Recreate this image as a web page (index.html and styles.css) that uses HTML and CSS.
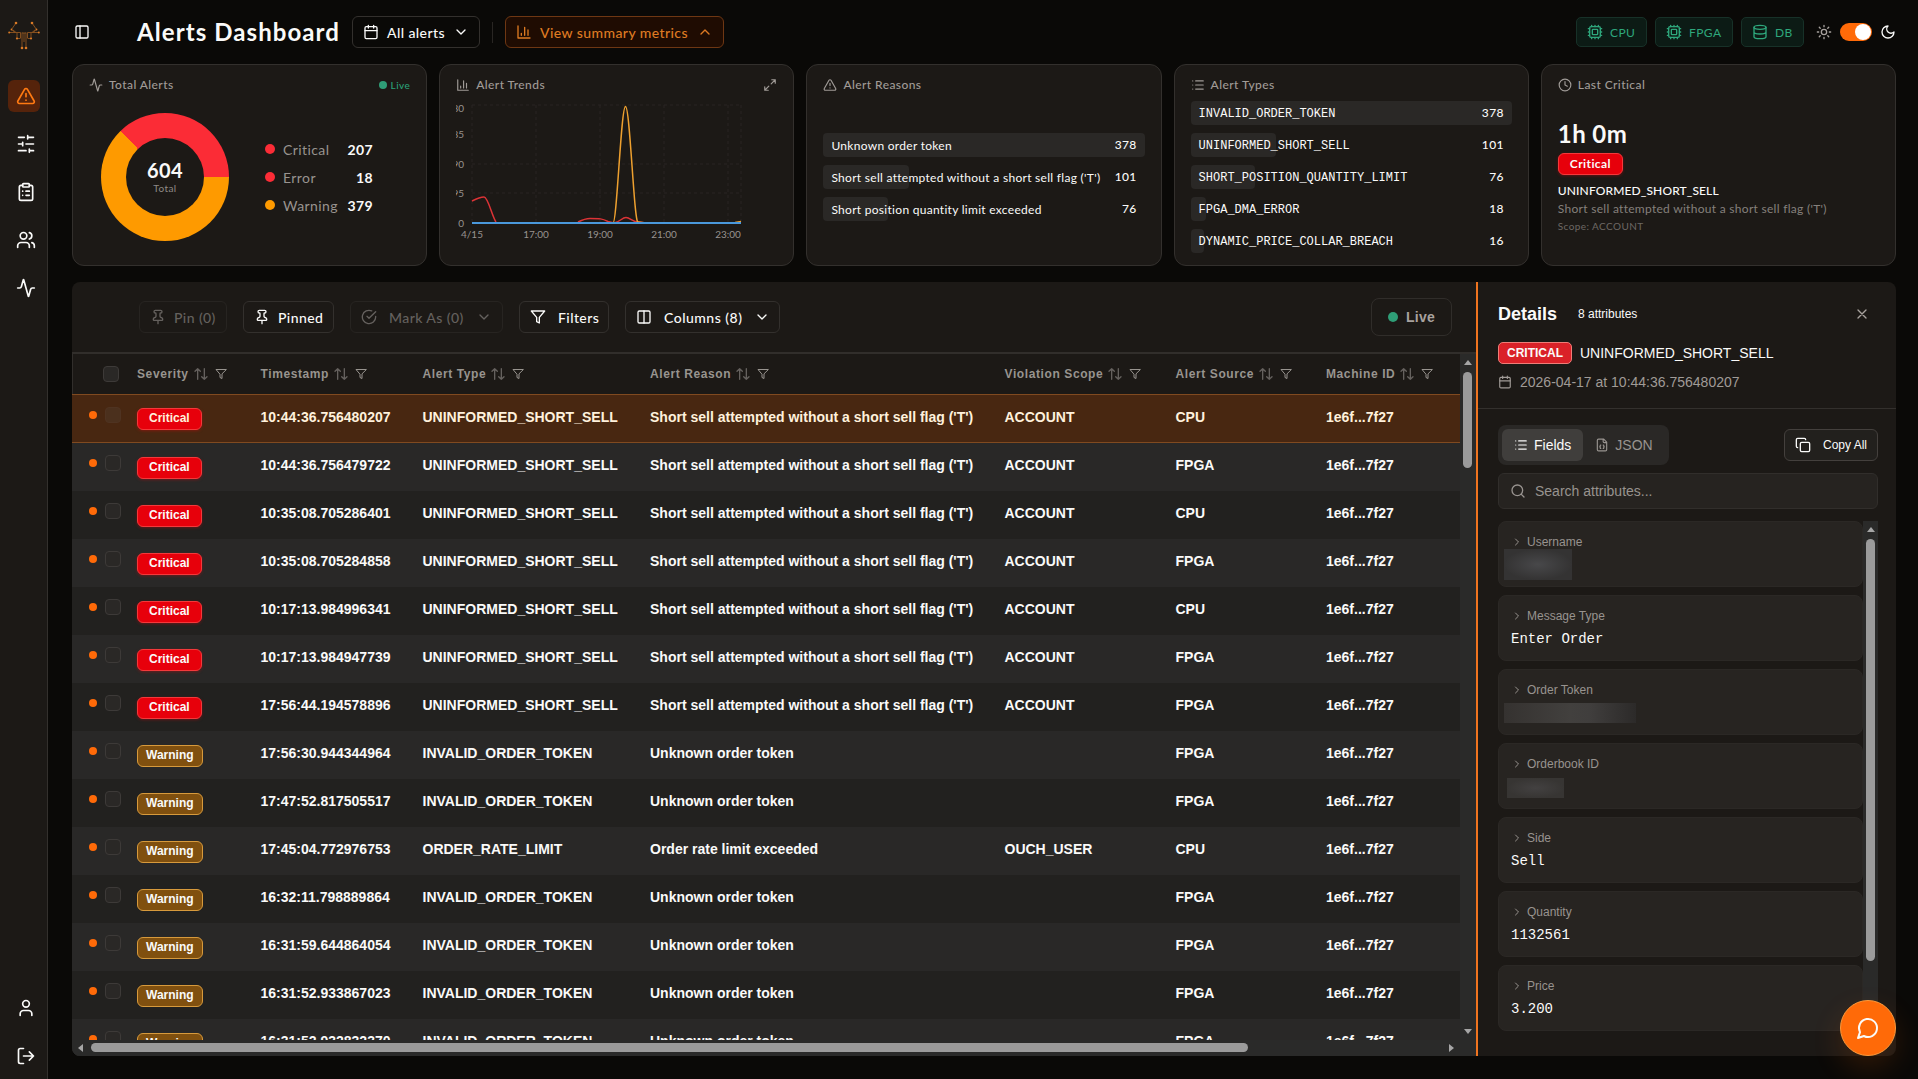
FILE: index.html
```
<!DOCTYPE html>
<html lang="en">
<head>
    <meta charset="UTF-8">
    <title>Alerts Dashboard</title>
    <link rel="stylesheet" href="styles.css">
</head>
<body>
    <!-- shared icons -->
    <svg class="sprite">
        <symbol id="i-panel" viewBox="0 0 24 24"><rect x="3" y="3" width="18" height="18" rx="2"/><path d="M9 3v18"/></symbol>
        <symbol id="i-calendar" viewBox="0 0 24 24"><path d="M8 2v4M16 2v4M3 10h18"/><rect x="3" y="4" width="18" height="18" rx="2"/></symbol>
        <symbol id="i-down" viewBox="0 0 24 24"><path d="m6 9 6 6 6-6"/></symbol>
        <symbol id="i-up" viewBox="0 0 24 24"><path d="m18 15-6-6-6 6"/></symbol>
        <symbol id="i-right" viewBox="0 0 24 24"><path d="m9 18 6-6-6-6"/></symbol>
        <symbol id="i-chart" viewBox="0 0 24 24"><path d="M3 3v18h18M18 17V9M13 17V5M8 17v-3"/></symbol>
        <symbol id="i-alert" viewBox="0 0 24 24"><path d="m21.73 18-8-14a2 2 0 0 0-3.48 0l-8 14A2 2 0 0 0 4 21h16a2 2 0 0 0 1.73-3M12 9v4M12 17h.01"/></symbol>
        <symbol id="i-sliders" viewBox="0 0 24 24"><path d="M21 4h-7M10 4H3M21 12h-9M8 12H3M21 20h-5M12 20H3M14 2v4M8 10v4M16 18v4"/></symbol>
        <symbol id="i-clipboard" viewBox="0 0 24 24"><rect x="8" y="2" width="8" height="4" rx="1"/><path d="M16 4h2a2 2 0 0 1 2 2v14a2 2 0 0 1-2 2H6a2 2 0 0 1-2-2V6a2 2 0 0 1 2-2h2M12 11h4M12 16h4M8 11h.01M8 16h.01"/></symbol>
        <symbol id="i-users" viewBox="0 0 24 24"><path d="M16 21v-2a4 4 0 0 0-4-4H6a4 4 0 0 0-4 4v2M22 21v-2a4 4 0 0 0-3-3.87M16 3.13a4 4 0 0 1 0 7.75"/><circle cx="9" cy="7" r="4"/></symbol>
        <symbol id="i-activity" viewBox="0 0 24 24"><path d="M22 12h-2.48a2 2 0 0 0-1.93 1.46l-2.35 8.36a.25.25 0 0 1-.48 0L9.24 2.18a.25.25 0 0 0-.48 0l-2.35 8.36A2 2 0 0 1 4.49 12H2"/></symbol>
        <symbol id="i-user" viewBox="0 0 24 24"><path d="M19 21v-2a4 4 0 0 0-4-4H9a4 4 0 0 0-4 4v2"/><circle cx="12" cy="7" r="4"/></symbol>
        <symbol id="i-logout" viewBox="0 0 24 24"><path d="M9 21H5a2 2 0 0 1-2-2V5a2 2 0 0 1 2-2h4M16 17l5-5-5-5M21 12H9"/></symbol>
        <symbol id="i-pin" viewBox="0 0 24 24"><path d="M12 17v5M9 10.76a2 2 0 0 1-1.11 1.79l-1.78.9A2 2 0 0 0 5 15.24V16a1 1 0 0 0 1 1h12a1 1 0 0 0 1-1v-.76a2 2 0 0 0-1.11-1.79l-1.78-.9A2 2 0 0 1 15 10.76V7a1 1 0 0 1 1-1 2 2 0 0 0 0-4H8a2 2 0 0 0 0 4 1 1 0 0 1 1 1z"/></symbol>
        <symbol id="i-check" viewBox="0 0 24 24"><path d="M22 11.08V12a10 10 0 1 1-5.93-9.14M9 11l3 3L22 4"/></symbol>
        <symbol id="i-filter" viewBox="0 0 24 24"><path d="M22 3H2l8 9.46V19l4 2v-8.54z"/></symbol>
        <symbol id="i-columns" viewBox="0 0 24 24"><rect x="3" y="3" width="18" height="18" rx="2"/><path d="M12 3v18"/></symbol>
        <symbol id="i-sort" viewBox="0 0 24 24"><path d="m21 16-4 4-4-4M17 20V4M3 8l4-4 4 4M7 4v16"/></symbol>
        <symbol id="i-close" viewBox="0 0 24 24"><path d="M18 6 6 18M6 6l12 12"/></symbol>
        <symbol id="i-list" viewBox="0 0 24 24"><path d="M3 5h.01M3 12h.01M3 19h.01M8 5h13M8 12h13M8 19h13"/></symbol>
        <symbol id="i-json" viewBox="0 0 24 24"><path d="M15 2H6a2 2 0 0 0-2 2v16a2 2 0 0 0 2 2h12a2 2 0 0 0 2-2V7ZM14 2v4a2 2 0 0 0 2 2h4M10 12a1 1 0 0 0-1 1v1a1 1 0 0 1-1 1 1 1 0 0 1 1 1v1a1 1 0 0 0 1 1M14 18a1 1 0 0 0 1-1v-1a1 1 0 0 1 1-1 1 1 0 0 1-1-1v-1a1 1 0 0 0-1-1"/></symbol>
        <symbol id="i-copy" viewBox="0 0 24 24"><rect x="8" y="8" width="14" height="14" rx="2"/><path d="M4 16c-1.1 0-2-.9-2-2V4c0-1.1.9-2 2-2h10c1.1 0 2 .9 2 2"/></symbol>
        <symbol id="i-search" viewBox="0 0 24 24"><circle cx="11" cy="11" r="8"/><path d="m21 21-4.3-4.3"/></symbol>
        <symbol id="i-expand" viewBox="0 0 24 24"><path d="M15 3h6v6M21 3l-7 7M3 21l7-7M9 21H3v-6"/></symbol>
        <symbol id="i-clock" viewBox="0 0 24 24"><circle cx="12" cy="12" r="10"/><path d="M12 6v6l4 2"/></symbol>
        <symbol id="i-cpu" viewBox="0 0 24 24"><rect x="4" y="4" width="16" height="16" rx="2"/><rect x="8" y="8" width="8" height="8" rx="1"/><path d="M12 20v2M12 2v2M17 20v2M17 2v2M2 12h2M2 17h2M2 7h2M20 12h2M20 17h2M20 7h2M7 20v2M7 2v2"/></symbol>
        <symbol id="i-db" viewBox="0 0 24 24"><ellipse cx="12" cy="5" rx="9" ry="3"/><path d="M3 5v14a9 3 0 0 0 18 0V5M3 12a9 3 0 0 0 18 0"/></symbol>
        <symbol id="i-sun" viewBox="0 0 24 24"><circle cx="12" cy="12" r="4"/><path d="M12 2v2M12 20v2M4.93 4.93l1.41 1.41M17.66 17.66l1.41 1.41M2 12h2M20 12h2M6.34 17.66l-1.41 1.41M19.07 4.93l-1.41 1.41"/></symbol>
        <symbol id="i-moon" viewBox="0 0 24 24"><path d="M12 3a6 6 0 0 0 9 9 9 9 0 1 1-9-9Z"/></symbol>
        <symbol id="i-chat" viewBox="0 0 24 24"><path d="M7.9 20A9 9 0 1 0 4 16.1L2 22Z"/></symbol>
    </svg>

    <div class="app">
        <nav class="sidebar">
            <svg class="logo" viewBox="0 0 32 30">
                <path d="M8 2 3.500 8.500 7 11.500h5.500V17M24 2l4.500 6.500-3.500 3h-5.500V17M1 11.500h6M31 11.500h-6M5 9l3 2.500M27 9l-3 2.500M9 12v5.500M23 12v5.500M14 11.500V27M18 11.500V27M14 12h4M16 12v9M9 17.500h3.500M23 17.500h-3.500"/>
                <g><circle cx="8" cy="2" r="1.3"/><circle cx="24" cy="2" r="1.3"/><circle cx="1.200" cy="11.500" r="1"/><circle cx="30.800" cy="11.500" r="1"/><circle cx="3.500" cy="8.500" r="0.900"/><circle cx="28.500" cy="8.500" r="0.900"/><circle cx="14" cy="27" r="1.3"/><circle cx="18" cy="27" r="1.3"/><circle cx="9" cy="17.500" r="1.100"/><circle cx="23" cy="17.500" r="1.100"/></g>
            </svg>
            <a class="nav-item active"><svg class="icon"><use href="#i-alert"/></svg></a>
            <a class="nav-item"><svg class="icon"><use href="#i-sliders"/></svg></a>
            <a class="nav-item"><svg class="icon"><use href="#i-clipboard"/></svg></a>
            <a class="nav-item"><svg class="icon"><use href="#i-users"/></svg></a>
            <a class="nav-item"><svg class="icon"><use href="#i-activity"/></svg></a>
            <div class="nav-bottom">
                <a class="nav-item"><svg class="icon"><use href="#i-user"/></svg></a>
                <a class="nav-item"><svg class="icon"><use href="#i-logout"/></svg></a>
            </div>
        </nav>

        <main class="main">
            <header class="topbar">
                <svg class="icon panel-toggle"><use href="#i-panel"/></svg>
                <h1>Alerts Dashboard</h1>
                <button class="btn all-alerts"><svg class="icon"><use href="#i-calendar"/></svg><span>All alerts</span><svg class="icon"><use href="#i-down"/></svg></button>
                <div class="divider"></div>
                <button class="btn summary"><svg class="icon"><use href="#i-chart"/></svg><span>View summary metrics</span><svg class="icon"><use href="#i-up"/></svg></button>
                <div class="status">
                    <span class="chip chip-cpu"><svg class="icon"><use href="#i-cpu"/></svg>CPU</span>
                    <span class="chip chip-fpga"><svg class="icon"><use href="#i-cpu"/></svg>FPGA</span>
                    <span class="chip chip-db"><svg class="icon"><use href="#i-db"/></svg>DB</span>
                    <svg class="icon sun"><use href="#i-sun"/></svg>
                    <span class="switch"></span>
                    <svg class="icon moon"><use href="#i-moon"/></svg>
                </div>
            </header>

            <section class="cards">
                <div class="card">
                    <div class="card-title"><svg class="icon"><use href="#i-activity"/></svg>Total Alerts <span class="live"><i></i>Live</span></div>
                    <div class="totals">
                        <div class="donut"><div class="donut-hole"><b>604</b><span>Total</span></div></div>
                        <ul class="legend">
                            <li><i class="red"></i><span>Critical</span><b>207</b></li>
                            <li><i class="red"></i><span>Error</span><b>18</b></li>
                            <li><i class="amber"></i><span>Warning</span><b>379</b></li>
                        </ul>
                    </div>
                </div>

                <div class="card">
                    <div class="card-title"><svg class="icon"><use href="#i-chart"/></svg>Alert Trends <svg class="icon expand"><use href="#i-expand"/></svg></div>
                    <svg class="trend" width="310" height="144" viewBox="0 0 310 144">
                        <g class="grid">
                            <path d="M16 5h269M16 64h269M16 93h269"/>
                            <path d="M16 5v118M80 5v118M144 5v118M208 5v118M272 5v118M285 5v118"/>
                        </g>
                        <g class="y-labels">
                            <text x="8" y="12">380</text>
                            <text x="8" y="38">285</text>
                            <text x="8" y="68">190</text>
                            <text x="8" y="97">95</text>
                            <text x="8" y="127">0</text>
                        </g>
                        <path class="line-red" d="M16 101C20 99 24 97 28 97C32 97 36 116 40 122M122 122C126 120 130 118.500 134 118.500C144 118.500 146 118.500 152 121.500L158 123C164 122 166 117.500 170 117.500C174 117.500 178 123 183 122L190 123"/>
                        <path class="line-amber" d="M157 123C161 123 165 6.500 169.500 6.500C174 6.500 178 123 182 122L190 123M279 122.500L285 121.500"/>
                        <path class="line-blue" d="M16 123h269"/>
                        <g class="x-labels">
                            <text x="16" y="138">4/15</text>
                            <text x="80" y="138">17:00</text>
                            <text x="144" y="138">19:00</text>
                            <text x="208" y="138">21:00</text>
                            <text x="272" y="138">23:00</text>
                        </g>
                    </svg>
                </div>

                <div class="card">
                    <div class="card-title"><svg class="icon"><use href="#i-alert"/></svg>Alert Reasons</div>
                    <div class="bars reasons">
                        <div class="bar"><div class="fill" style="width: 100%"></div><span>Unknown order token</span><b>378</b></div>
                        <div class="bar"><div class="fill" style="width: 26.7%"></div><span>Short sell attempted without a short sell flag ('T')</span><b>101</b></div>
                        <div class="bar"><div class="fill" style="width: 20.1%"></div><span>Short position quantity limit exceeded</span><b>76</b></div>
                    </div>
                </div>

                <div class="card">
                    <div class="card-title"><svg class="icon"><use href="#i-list"/></svg>Alert Types</div>
                    <div class="bars types">
                        <div class="bar"><div class="fill" style="width: 100%"></div><span>INVALID_ORDER_TOKEN</span><b>378</b></div>
                        <div class="bar"><div class="fill" style="width: 26.7%"></div><span>UNINFORMED_SHORT_SELL</span><b>101</b></div>
                        <div class="bar"><div class="fill" style="width: 20.1%"></div><span>SHORT_POSITION_QUANTITY_LIMIT</span><b>76</b></div>
                        <div class="bar"><div class="fill" style="width: 4.8%"></div><span>FPGA_DMA_ERROR</span><b>18</b></div>
                        <div class="bar"><div class="fill" style="width: 4.2%"></div><span>DYNAMIC_PRICE_COLLAR_BREACH</span><b>16</b></div>
                    </div>
                </div>

                <div class="card">
                    <div class="card-title"><svg class="icon"><use href="#i-clock"/></svg>Last Critical</div>
                    <div class="last">
                        <div class="ago">1h 0m</div>
                        <span class="badge critical">Critical</span>
                        <div class="last-type">UNINFORMED_SHORT_SELL</div>
                        <div class="last-reason">Short sell attempted without a short sell flag ('T')</div>
                        <div class="last-scope">Scope: ACCOUNT</div>
                    </div>
                </div>
            </section>

            <section class="workspace">
                <div class="alerts">
                    <div class="toolbar">
                        <button class="btn pin disabled"><svg class="icon"><use href="#i-pin"/></svg><span>Pin (0)</span></button>
                        <button class="btn pinned"><svg class="icon"><use href="#i-pin"/></svg><span>Pinned</span></button>
                        <button class="btn wide mark disabled"><svg class="icon"><use href="#i-check"/></svg><span>Mark As (0)</span><svg class="icon"><use href="#i-down"/></svg></button>
                        <button class="btn wide filters"><svg class="icon"><use href="#i-filter"/></svg><span>Filters</span></button>
                        <button class="btn wide columns"><svg class="icon"><use href="#i-columns"/></svg><span>Columns (8)</span><svg class="icon"><use href="#i-down"/></svg></button>
                        <div class="live-box"><i></i>Live</div>
                    </div>

                    <div class="table-wrap">
                        <div class="table">
                            <div class="row head">
                                <div class="sel"><span class="box"></span></div>
                                <div>Severity<svg class="icon sort"><use href="#i-sort"/></svg><svg class="icon"><use href="#i-filter"/></svg></div>
                                <div>Timestamp<svg class="icon sort"><use href="#i-sort"/></svg><svg class="icon"><use href="#i-filter"/></svg></div>
                                <div>Alert Type<svg class="icon sort"><use href="#i-sort"/></svg><svg class="icon"><use href="#i-filter"/></svg></div>
                                <div>Alert Reason<svg class="icon sort"><use href="#i-sort"/></svg><svg class="icon"><use href="#i-filter"/></svg></div>
                                <div>Violation Scope<svg class="icon sort"><use href="#i-sort"/></svg><svg class="icon"><use href="#i-filter"/></svg></div>
                                <div>Alert Source<svg class="icon sort"><use href="#i-sort"/></svg><svg class="icon"><use href="#i-filter"/></svg></div>
                                <div>Machine ID<svg class="icon sort"><use href="#i-sort"/></svg><svg class="icon"><use href="#i-filter"/></svg></div>
                            </div>
                            <div class="row selected">
                                <div class="sel"><i></i><span class="box"></span></div><div><span class="badge critical">Critical</span></div>
                                <div>10:44:36.756480207</div><div>UNINFORMED_SHORT_SELL</div><div>Short sell attempted without a short sell flag ('T')</div><div>ACCOUNT</div><div>CPU</div><div>1e6f...7f27</div>
                            </div>
                            <div class="row">
                                <div class="sel"><i></i><span class="box"></span></div><div><span class="badge critical">Critical</span></div>
                                <div>10:44:36.756479722</div><div>UNINFORMED_SHORT_SELL</div><div>Short sell attempted without a short sell flag ('T')</div><div>ACCOUNT</div><div>FPGA</div><div>1e6f...7f27</div>
                            </div>
                            <div class="row">
                                <div class="sel"><i></i><span class="box"></span></div><div><span class="badge critical">Critical</span></div>
                                <div>10:35:08.705286401</div><div>UNINFORMED_SHORT_SELL</div><div>Short sell attempted without a short sell flag ('T')</div><div>ACCOUNT</div><div>CPU</div><div>1e6f...7f27</div>
                            </div>
                            <div class="row">
                                <div class="sel"><i></i><span class="box"></span></div><div><span class="badge critical">Critical</span></div>
                                <div>10:35:08.705284858</div><div>UNINFORMED_SHORT_SELL</div><div>Short sell attempted without a short sell flag ('T')</div><div>ACCOUNT</div><div>FPGA</div><div>1e6f...7f27</div>
                            </div>
                            <div class="row">
                                <div class="sel"><i></i><span class="box"></span></div><div><span class="badge critical">Critical</span></div>
                                <div>10:17:13.984996341</div><div>UNINFORMED_SHORT_SELL</div><div>Short sell attempted without a short sell flag ('T')</div><div>ACCOUNT</div><div>CPU</div><div>1e6f...7f27</div>
                            </div>
                            <div class="row">
                                <div class="sel"><i></i><span class="box"></span></div><div><span class="badge critical">Critical</span></div>
                                <div>10:17:13.984947739</div><div>UNINFORMED_SHORT_SELL</div><div>Short sell attempted without a short sell flag ('T')</div><div>ACCOUNT</div><div>FPGA</div><div>1e6f...7f27</div>
                            </div>
                            <div class="row">
                                <div class="sel"><i></i><span class="box"></span></div><div><span class="badge critical">Critical</span></div>
                                <div>17:56:44.194578896</div><div>UNINFORMED_SHORT_SELL</div><div>Short sell attempted without a short sell flag ('T')</div><div>ACCOUNT</div><div>FPGA</div><div>1e6f...7f27</div>
                            </div>
                            <div class="row">
                                <div class="sel"><i></i><span class="box"></span></div><div><span class="badge warning">Warning</span></div>
                                <div>17:56:30.944344964</div><div>INVALID_ORDER_TOKEN</div><div>Unknown order token</div><div></div><div>FPGA</div><div>1e6f...7f27</div>
                            </div>
                            <div class="row">
                                <div class="sel"><i></i><span class="box"></span></div><div><span class="badge warning">Warning</span></div>
                                <div>17:47:52.817505517</div><div>INVALID_ORDER_TOKEN</div><div>Unknown order token</div><div></div><div>FPGA</div><div>1e6f...7f27</div>
                            </div>
                            <div class="row">
                                <div class="sel"><i></i><span class="box"></span></div><div><span class="badge warning">Warning</span></div>
                                <div>17:45:04.772976753</div><div>ORDER_RATE_LIMIT</div><div>Order rate limit exceeded</div><div>OUCH_USER</div><div>CPU</div><div>1e6f...7f27</div>
                            </div>
                            <div class="row">
                                <div class="sel"><i></i><span class="box"></span></div><div><span class="badge warning">Warning</span></div>
                                <div>16:32:11.798889864</div><div>INVALID_ORDER_TOKEN</div><div>Unknown order token</div><div></div><div>FPGA</div><div>1e6f...7f27</div>
                            </div>
                            <div class="row">
                                <div class="sel"><i></i><span class="box"></span></div><div><span class="badge warning">Warning</span></div>
                                <div>16:31:59.644864054</div><div>INVALID_ORDER_TOKEN</div><div>Unknown order token</div><div></div><div>FPGA</div><div>1e6f...7f27</div>
                            </div>
                            <div class="row">
                                <div class="sel"><i></i><span class="box"></span></div><div><span class="badge warning">Warning</span></div>
                                <div>16:31:52.933867023</div><div>INVALID_ORDER_TOKEN</div><div>Unknown order token</div><div></div><div>FPGA</div><div>1e6f...7f27</div>
                            </div>
                            <div class="row">
                                <div class="sel"><i></i><span class="box"></span></div><div><span class="badge warning">Warning</span></div>
                                <div>16:31:52.932832370</div><div>INVALID_ORDER_TOKEN</div><div>Unknown order token</div><div></div><div>FPGA</div><div>1e6f...7f27</div>
                            </div>
                        </div>
                        <div class="vscroll"><span class="arrow-up"></span><span class="thumb"></span><span class="arrow-down"></span></div>
                        <div class="hscroll"><span class="arrow-left"></span><span class="thumb"></span><span class="arrow-right"></span></div>
                    </div>
                </div>

                <aside class="details">
                    <div class="details-head">
                        <div class="details-title"><h2>Details</h2><span>8 attributes</span><svg class="icon"><use href="#i-close"/></svg></div>
                        <div class="details-type"><span class="tag">CRITICAL</span>UNINFORMED_SHORT_SELL</div>
                        <div class="details-date"><svg class="icon"><use href="#i-calendar"/></svg>2026-04-17 at 10:44:36.756480207</div>
                    </div>
                    <div class="details-body">
                        <div class="details-tools">
                            <div class="tabs">
                                <span class="tab on"><svg class="icon"><use href="#i-list"/></svg>Fields</span>
                                <span class="tab"><svg class="icon"><use href="#i-json"/></svg>JSON</span>
                            </div>
                            <button class="copy"><svg class="icon"><use href="#i-copy"/></svg>Copy All</button>
                        </div>
                        <div class="search"><svg class="icon"><use href="#i-search"/></svg>Search attributes...</div>
                        <div class="fields-wrap">
                            <div class="fields">
                                <div class="field"><label><svg class="icon"><use href="#i-right"/></svg>Username</label><div class="masked mask-user"></div></div>
                                <div class="field"><label><svg class="icon"><use href="#i-right"/></svg>Message Type</label><p>Enter Order</p></div>
                                <div class="field"><label><svg class="icon"><use href="#i-right"/></svg>Order Token</label><div class="masked mask-token"></div></div>
                                <div class="field"><label><svg class="icon"><use href="#i-right"/></svg>Orderbook ID</label><div class="masked mask-book"></div></div>
                                <div class="field"><label><svg class="icon"><use href="#i-right"/></svg>Side</label><p>Sell</p></div>
                                <div class="field"><label><svg class="icon"><use href="#i-right"/></svg>Quantity</label><p>1132561</p></div>
                                <div class="field"><label><svg class="icon"><use href="#i-right"/></svg>Price</label><p>3.200</p></div>
                            </div>
                            <div class="vscroll"><span class="arrow-up"></span><span class="thumb"></span><span class="arrow-down"></span></div>
                        </div>
                    </div>
                </aside>
            </section>
        </main>
    </div>

    <button class="fab"><svg class="icon"><use href="#i-chat"/></svg></button>
</body>
</html>
```
FILE: styles.css
```
* {
    box-sizing: border-box;
}

body {
    margin: 0;
    height: 1079px;
    overflow: hidden;
    background: #0a0907;
    color: #fafaf9;
    font-family: Lato, "Open Sans", sans-serif;
    font-size: 14px;
    letter-spacing: 0.03em;
}

h1, h2, p, ul {
    margin: 0;
    padding: 0;
}

button {
    font: inherit;
    letter-spacing: inherit;
    color: inherit;
}

.sprite {
    display: none;
}

.icon {
    width: 16px;
    height: 16px;
    flex: none;
    fill: none;
    stroke: currentColor;
    stroke-width: 2;
    stroke-linecap: round;
    stroke-linejoin: round;
}

.app {
    display: flex;
    height: 1079px;
}

/* sidebar */
.sidebar {
    display: flex;
    flex-direction: column;
    width: 48px;
    padding: 21px 7px 7px 8px;
    background: #1c1916;
    border-right: 1px solid #33302d;
}

.logo {
    width: 32px;
    height: 30px;
    margin-bottom: 29px;
    fill: none;
    stroke: #8f5520;
    stroke-width: 0.9;
}

.logo g {
    fill: #d97a26;
    stroke: none;
}

.nav-item {
    display: flex;
    align-items: center;
    width: 32px;
    height: 32px;
    margin-bottom: 16px;
    padding-left: 8px;
    border-radius: 6px;
}

.nav-item .icon {
    width: 20px;
    height: 20px;
}

.nav-item.active {
    background: #55230b;
    color: #ff7a12;
}

.nav-bottom {
    margin-top: auto;
}

.nav-bottom .nav-item:last-child {
    margin-bottom: 0;
}

/* header */
.main {
    display: flex;
    flex-direction: column;
    flex: 1;
    padding: 16px 22px 23px 24px;
}

.topbar {
    display: flex;
    align-items: center;
    height: 32px;
    margin-bottom: 16px;
}

.panel-toggle {
    margin: 0 47px 0 2px;
}

h1 {
    width: 215px;
    font-size: 24px;
    font-weight: 700;
    letter-spacing: 0.045em;
    line-height: 32px;
    white-space: nowrap;
}

.btn {
    display: flex;
    align-items: center;
    gap: 8px;
    height: 32px;
    padding: 0 10px;
    border: 1px solid #33302d;
    border-radius: 6px;
    background: transparent;
    font-weight: 500;
    white-space: nowrap;
}

.btn .icon:nth-child(3) {
    margin-left: auto;
}

.all-alerts {
    width: 128px;
}

.divider {
    width: 1px;
    height: 21px;
    margin: 0 12px;
    background: #292623;
}

.summary {
    width: 219px;
    border-color: #6e3713;
    background: #1f0c02;
    color: #dd7a22;
}

.status {
    display: flex;
    align-items: center;
    margin-left: auto;
}

.chip {
    display: flex;
    align-items: center;
    gap: 7px;
    height: 30px;
    margin-right: 8px;
    padding: 0 11px 0 10px;
    border: 1px solid #173128;
    border-radius: 5px;
    background: #0c1b15;
    color: #2ea77c;
    font-size: 12px;
}

.chip-cpu {
    width: 71px;
}

.chip-fpga {
    width: 78px;
}

.chip-db {
    width: 63px;
    margin-right: 12px;
}

.sun {
    color: #a8a29e;
}

.switch {
    display: flex;
    justify-content: flex-end;
    width: 32px;
    height: 18px;
    margin: 0 8px;
    padding: 1px;
    border-radius: 9px;
    background: #ff6a08;
}

.switch::after {
    content: '';
    width: 16px;
    height: 16px;
    border-radius: 50%;
    background: #fff;
}

/* summary cards */
.cards {
    display: grid;
    grid-template-columns: repeat(5, 1fr);
    gap: 12px;
    height: 202px;
    margin-bottom: 16px;
}

.card {
    display: flex;
    flex-direction: column;
    min-width: 0;
    padding: 12px 16px;
    border: 1px solid #33302d;
    border-radius: 12px;
    background: #1c1916;
}

.card-title {
    display: flex;
    align-items: center;
    gap: 6px;
    height: 16px;
    color: #a09b97;
    font-size: 12px;
    font-weight: 500;
    line-height: 14px;
    padding-bottom: 1px;
}

.card-title .icon {
    width: 14px;
    height: 14px;
}

.card-title .expand {
    margin-left: auto;
}

.live {
    display: flex;
    align-items: center;
    gap: 4px;
    margin-left: auto;
    color: #2aa079;
    font-size: 10px;
}

.live i {
    width: 8px;
    height: 8px;
    border-radius: 50%;
    background: #2f9e77;
}

.totals {
    display: flex;
    align-items: center;
    flex: 1;
    gap: 36px;
    padding: 16px 0 8px 12px;
}

.donut {
    display: flex;
    align-items: center;
    justify-content: center;
    width: 128px;
    height: 128px;
    border-radius: 50%;
    background: conic-gradient(from -44deg, #fb2c36 0 134deg, #fe9a00 134deg);
}

.donut-hole {
    display: flex;
    flex-direction: column;
    align-items: center;
    justify-content: center;
    width: 78px;
    height: 78px;
    border-radius: 50%;
    background: #1c1916;
}

.donut-hole b {
    font-size: 20px;
    line-height: 22px;
}

.donut-hole span {
    color: #8f8a86;
    font-size: 10px;
    line-height: 14px;
}

.legend {
    list-style: none;
}

.legend li {
    display: flex;
    align-items: center;
    width: 108px;
    height: 28px;
}

.legend i {
    width: 10px;
    height: 10px;
    margin-right: 8px;
    border-radius: 50%;
}

.legend .red {
    background: #fb2c36;
}

.legend .amber {
    background: #fe9a00;
}

.legend span {
    color: #98938f;
}

.legend b {
    margin-left: auto;
}

.trend {
    display: block;
    margin-top: 7px;
    overflow: hidden;
    font-size: 10px;
    letter-spacing: 0;
}

.grid path {
    fill: none;
    stroke: #282522;
    stroke-dasharray: 3 3;
}

.y-labels, .x-labels {
    fill: #98938f;
}

.y-labels text {
    text-anchor: end;
}

.x-labels text {
    text-anchor: middle;
}

.line-red, .line-amber, .line-blue {
    fill: none;
    stroke-width: 1.5;
}

.line-red {
    stroke: #dc3336;
}

.line-amber {
    stroke: #eea02f;
}

.line-blue {
    stroke: #4a98db;
    stroke-width: 2;
}

.bars {
    display: flex;
    flex-direction: column;
    justify-content: center;
    gap: 8px;
    flex: 1;
    font-size: 12px;
}

.reasons {
    padding-top: 8px;
}

.types {
    justify-content: flex-start;
    padding-top: 8px;
    font-family: "Liberation Mono", monospace;
    letter-spacing: 0;
}

.bar {
    display: flex;
    position: relative;
    align-items: center;
    justify-content: space-between;
    height: 24px;
    padding: 0 8px;
    white-space: nowrap;
}

.bar .fill {
    position: absolute;
    left: 0;
    top: 0;
    height: 24px;
    border-radius: 4px;
    background: #2a2826;
}

.bar span, .bar b {
    position: relative;
}

.reasons .bar span {
    letter-spacing: 0.024em;
}

.types .bar span {
    padding-top: 1px;
}

.bar b {
    padding-bottom: 1px;
    font-family: Lato, sans-serif;
    font-weight: 500;
    letter-spacing: 0.03em;
}

.last {
    display: flex;
    flex-direction: column;
    align-items: flex-start;
    justify-content: center;
    flex: 1;
    padding-top: 6px;
    font-size: 12px;
}

.ago {
    margin-bottom: 3px;
    font-size: 24px;
    font-weight: 700;
    line-height: 32px;
}

.last-type {
    margin-top: 7px;
    font-weight: 500;
    letter-spacing: 0.01em;
    line-height: 18px;
}

.last-reason {
    color: #85807c;
    letter-spacing: 0.024em;
    line-height: 18px;
}

.last-scope {
    color: #6d6864;
    font-size: 10px;
    line-height: 17px;
}

.badge {
    display: inline-flex;
    align-items: center;
    height: 22px;
    padding: 0 11px;
    border: 1px solid;
    border-radius: 6px;
    font-size: 12px;
    font-weight: 700;
}

.badge.critical {
    border-color: #f3393b;
    background: #e7000b;
    box-shadow: 0 1px 3px rgba(231, 0, 11, 0.35);
}

.badge.warning {
    padding: 0 8px;
    border-color: #d79a3c;
    background: #80500f;
}

/* table panel */
.workspace {
    display: grid;
    grid-template-columns: 1404px 1fr;
    flex: 1;
    min-height: 0;
    overflow: hidden;
    border-radius: 8px;
    background: #1c1916;
    font-family: "Liberation Sans", Arial, sans-serif;
    letter-spacing: 0;
}

.alerts {
    display: flex;
    flex-direction: column;
    min-width: 0;
    min-height: 0;
}

.toolbar {
    display: flex;
    align-items: center;
    gap: 16px;
    height: 72px;
    padding: 0 24px 0 67px;
    border-bottom: 2px solid #312e2b;
    font-family: Lato, sans-serif;
    letter-spacing: 0.03em;
}

.btn.wide {
    gap: 12px;
}

.btn.disabled {
    border-color: #272421;
    color: #65615e;
}

.pin {
    width: 88px;
}

.pinned {
    width: 91px;
}

.mark {
    width: 153px;
}

.filters {
    width: 90px;
}

.columns {
    width: 155px;
    letter-spacing: 0.035em;
}

.live-box {
    display: flex;
    align-items: center;
    gap: 8px;
    width: 81px;
    height: 38px;
    margin-left: auto;
    padding-left: 16px;
    border: 1px solid #302d2a;
    border-radius: 8px;
    color: #a8a29e;
    font-family: "Liberation Sans", Arial, sans-serif;
    font-weight: 700;
    letter-spacing: 0.02em;
}

.live-box i {
    width: 10px;
    height: 10px;
    border-radius: 50%;
    background: #2f9e77;
}

.table-wrap {
    display: grid;
    grid-template-columns: 1388px 16px;
    grid-template-rows: 1fr 16px;
    flex: 1;
    min-height: 0;
    background: #2a2a29;
}

.table {
    min-height: 0;
    overflow: hidden;
    background: #1c1916;
}

.row {
    display: grid;
    grid-template-columns: 65px 123.500px 162px 227.500px 354.500px 171px 150.500px 1fr;
    align-items: center;
    height: 48px;
    background: #22211f;
    font-weight: 700;
    white-space: nowrap;
}

.row:nth-child(odd) {
    background: #292827;
}

.row > div {
    padding-bottom: 4px;
}

.row.head {
    height: 40px;
    border-left: 1px solid #312e2b;
    background: #1c1916;
    grid-template-columns: 64px 123.500px 162px 227.500px 354.500px 171px 150.500px 1fr;
    color: #98948f;
    font-size: 12px;
    letter-spacing: 0.05em;
}

.row.head > div {
    display: flex;
    align-items: center;
    padding: 0;
}

.head .icon {
    width: 12px;
    height: 12px;
    margin-left: 6px;
}

.head .icon.sort {
    width: 16px;
    height: 16px;
    margin-left: 4px;
    color: #65615e;
}

.row.selected {
    height: 49px;
    border: 1px solid #804a20;
    border-width: 1px 0;
    background: #482711;
    color: #fff1dc;
}

.row .badge {
    margin-top: 5px;
    padding-bottom: 2px;
    vertical-align: middle;
}

.row .sel {
    display: flex;
    align-items: center;
    gap: 8px;
    padding-left: 17px;
}

.row:not(.head) > .sel {
    padding-bottom: 8px;
}

.row.head > .sel {
    padding-left: 30px;
}

.sel i {
    width: 8px;
    height: 8px;
    border-radius: 50%;
    background: #ff6a08;
}

.box {
    width: 16px;
    height: 16px;
    border: 1px solid #3d3a38;
    border-radius: 4px;
    background: #2a2826;
}

.selected .box {
    border-color: #4f3321;
    background: #4b301d;
}

/* scrollbars */
.vscroll {
    display: flex;
    flex-direction: column;
    align-items: center;
    padding: 6px 1px 6px 0;
    background: #2a2a29;
}

.vscroll .thumb {
    width: 9px;
    height: 96px;
    margin-top: 7px;
    border-radius: 5px;
    background: #9b9b9b;
}

.arrow-up, .arrow-down {
    border: 4.500px solid transparent;
    border-top-width: 0;
    border-bottom: 5px solid #a6a6a6;
}

.arrow-down {
    margin-top: auto;
    border-top: 5px solid #a6a6a6;
    border-bottom-width: 0;
}

.hscroll {
    display: flex;
    grid-column: 1 / 3;
    align-items: center;
    padding: 0 22px 1px 6px;
    background: #2a2a29;
}

.hscroll .thumb {
    width: 1157px;
    height: 9px;
    margin-left: 8px;
    border-radius: 5px;
    background: #9b9b9b;
}

.arrow-left, .arrow-right {
    border: 4.500px solid transparent;
    border-left-width: 0;
    border-right: 5px solid #a6a6a6;
}

.arrow-right {
    margin-left: auto;
    border-left: 5px solid #a6a6a6;
    border-right-width: 0;
}

/* details panel */
.details {
    display: flex;
    flex-direction: column;
    min-width: 0;
    min-height: 0;
    border-left: 2px solid #f0741f;
}

.details-head {
    display: flex;
    flex-direction: column;
    height: 127px;
    padding: 20px 20px 0;
    border-bottom: 1px solid #33302d;
}

.details-title {
    display: flex;
    align-items: center;
    height: 24px;
    margin-bottom: 16px;
    padding-right: 6px;
    font-size: 12px;
}

.details-title h2 {
    width: 80px;
    font-size: 18px;
}

.details-title .icon {
    margin-left: auto;
    color: #a8a29e;
}

.details-type {
    display: flex;
    align-items: center;
    gap: 8px;
    height: 22px;
    margin-bottom: 10px;
}

.tag {
    width: 74px;
    height: 22px;
    border: 1px solid #ee7d78;
    border-radius: 5px;
    background: #da2128;
    font-size: 12px;
    font-weight: 700;
    line-height: 20px;
    text-align: center;
}

.details-date {
    display: flex;
    align-items: center;
    gap: 8px;
    color: #a09b97;
    line-height: 16px;
}

.details-date .icon {
    width: 14px;
    height: 14px;
}

.details-body {
    display: flex;
    flex-direction: column;
    flex: 1;
    min-height: 0;
    padding: 16px 18px 25px 20px;
}

.details-tools {
    display: flex;
    align-items: center;
    justify-content: space-between;
    height: 40px;
    margin-bottom: 8px;
}

.tabs {
    display: flex;
    align-items: center;
    width: 171px;
    height: 40px;
    padding: 4px;
    border-radius: 8px;
    background: #2a2826;
}

.tab {
    display: flex;
    align-items: center;
    gap: 6px;
    height: 32px;
    padding: 0 12px;
    border-radius: 6px;
    color: #98938f;
}

.tab .icon {
    width: 14px;
    height: 14px;
}

.tab.on {
    background: #403e3c;
    color: #fafaf9;
}

.copy {
    display: flex;
    align-items: center;
    gap: 12px;
    width: 94px;
    height: 32px;
    padding: 0 0 0 10px;
    border: 1px solid #44403d;
    border-radius: 6px;
    background: #22201d;
    font-size: 12px;
}

.search {
    display: flex;
    align-items: center;
    gap: 9px;
    height: 36px;
    margin-bottom: 12px;
    padding: 0 11px;
    border: 1px solid #312e2b;
    border-radius: 6px;
    background: #262320;
    color: #98938f;
}

.fields-wrap {
    display: flex;
    flex: 1;
    min-height: 0;
}

.fields {
    display: flex;
    flex-direction: column;
    gap: 8px;
    flex: 1;
}

.field {
    height: 66px;
    padding: 12px 12px 0;
    border: 1px solid #2b2825;
    border-radius: 8px;
    background: #272421;
}

.field label {
    display: flex;
    align-items: center;
    gap: 4px;
    height: 16px;
    color: #98938f;
    font-size: 12px;
}

.field label .icon {
    width: 12px;
    height: 12px;
}

.field p {
    margin-top: 6px;
    font-family: "Liberation Mono", monospace;
    font-size: 14px;
    line-height: 18px;
}

/* hidden values */
.masked {
    height: 20px;
    margin: 5px 0 0 -7px;
    background: radial-gradient(ellipse closest-side, #434141, #373533);
}

.mask-user {
    width: 68px;
    height: 31px;
    margin-top: -1px;
    background: radial-gradient(ellipse closest-side, #48484a, #343333);
}

.mask-token {
    width: 132px;
    background: linear-gradient(90deg, #353230, #42403e 50%, #403e3d 65%, #2c2a29);
}

.mask-book {
    width: 57px;
    margin: 6px 0 0 -4px;
}

.details .vscroll {
    width: 15px;
    padding-right: 0;
}

.details .vscroll .thumb {
    height: 422px;
}

.fab {
    display: flex;
    position: fixed;
    align-items: center;
    justify-content: center;
    left: 1840px;
    top: 1000px;
    width: 56px;
    height: 56px;
    border: 1px solid #fb9a3c;
    border-radius: 50%;
    background: #ff6a08;
    box-shadow: 0 12px 30px rgba(255, 106, 8, 0.16);
}

.fab .icon {
    width: 24px;
    height: 24px;
}
```
